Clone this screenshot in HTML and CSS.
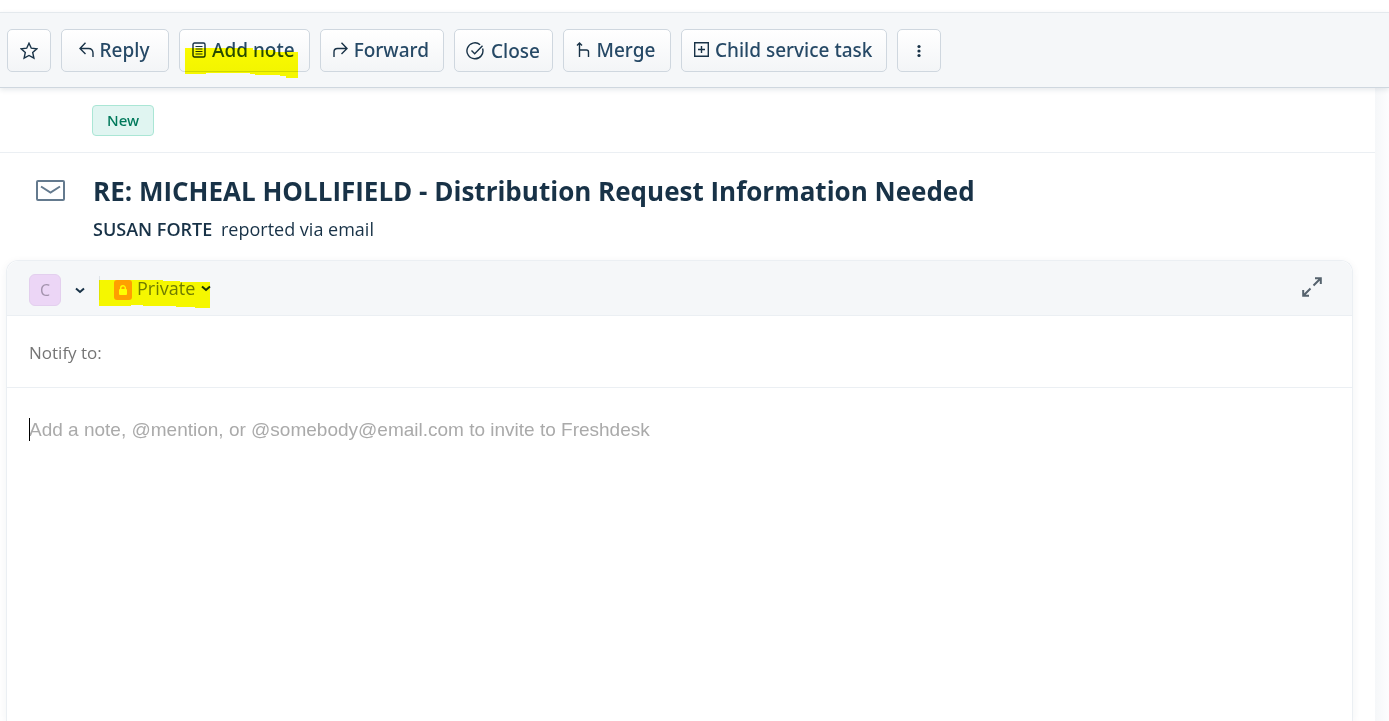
FILE: index.html
```html
<!DOCTYPE html>
<html lang="en">
<head>
	<meta charset="utf-8">
	<title>RE: MICHEAL HOLLIFIELD - Distribution Request Information Needed</title>
	<link rel="stylesheet" href="styles.css">
</head>
<body>

	<header class="toolbar">
		<button class="btn btn-icon" aria-label="Watch">
			<svg width="18" height="18" viewBox="0 0 18 18"><path d="M9 1.200l2.300 5 5.500.6-4.100 3.700 1.200 5.700L9 13.500l-4.900 2.700 1.200-5.700L1.200 6.800l5.500-.6z"/></svg>
		</button>
		<button class="btn">
			<svg width="15" height="16" viewBox="0 0 15 16"><path d="M6.500.800L1 6.500l5.500 5.500M1 6.500H9.500Q14 6.500 14 11v4"/></svg>
			Reply
		</button>
		<button class="btn marked">
			<svg width="14" height="16" viewBox="0 0 14 16"><rect x="1" y="1" width="12" height="14" rx="1.500"/><path class="thin" d="M3.500 4.500h7M3.500 7h7M3.500 9.500h7M3.500 12h7"/></svg>
			Add note
			<svg class="marker" width="113" height="30" viewBox="0 0 113 30"><path d="M0 0H68V2H90V4H113V30H101V28H95V27H70V26H65V25H21V26H0z"/></svg>
		</button>
		<button class="btn">
			<svg width="15" height="16" viewBox="0 0 15 16"><path d="M8.500.800L14 6.500 8.500 12M14 6.500H4.500Q1 6.500 1 10v5"/></svg>
			Forward
		</button>
		<button class="btn btn-close">
			<svg width="18" height="18" viewBox="0 0 18 18"><path d="M16.600 6.500a8 8 0 1 1-2.500-3.800M5.500 8.500l3.200 3.200L16.500 3.800"/></svg>
			Close
		</button>
		<button class="btn">
			<svg width="14" height="16" viewBox="0 0 14 16"><path d="M1 3.500L3.500 1 6 3.500M3.500 1v14M3.500 8h7q2 0 2 2v5"/></svg>
			Merge
		</button>
		<button class="btn">
			<svg width="15" height="15" viewBox="0 0 15 15"><path d="M.7.700h13.600v13.600H.7zM7.500 4v7M4 7.500h7"/></svg>
			Child service task
		</button>
		<button class="btn btn-icon" aria-label="More">
			<svg class="dots" width="4" height="14" viewBox="0 0 4 14"><circle cx="2" cy="2.500" r="1.600"/><circle cx="2" cy="7" r="1.600"/><circle cx="2" cy="11.500" r="1.600"/></svg>
		</button>
	</header>

	<div class="page">
		<main class="ticket">
			<div class="status-row">
				<span class="badge">New</span>
			</div>

			<div class="subject">
				<svg class="mail" width="29" height="21" viewBox="0 0 29 21"><rect x="1" y="1" width="27" height="19" rx="1"/><path d="M5 6.500l9.500 6 9.500-6"/></svg>
				<div>
					<h1>RE: MICHEAL HOLLIFIELD - Distribution Request Information Needed</h1>
					<p><strong>SUSAN FORTE</strong> reported via email</p>
				</div>
			</div>

			<form class="editor">
				<div class="editor-head">
					<button type="button" class="agent" aria-label="Agent">
						<span class="avatar">C</span>
						<svg class="chevron" width="10" height="7" viewBox="0 0 10 7"><path d="M1 1.500l4 3.500 4-3.500"/></svg>
					</button>
					<div class="privacy">
						<svg class="lock" width="18" height="20" viewBox="0 0 18 20"><rect class="lock-bg" width="18" height="20" rx="3"/><rect class="lock-body" x="5" y="9" width="8" height="6" rx="1"/><path class="lock-bow" d="M6.700 9.500V8a2.300 2.300 0 0 1 4.600 0v1.500"/></svg>
						<select aria-label="Note visibility">
							<option>Private</option>
							<option>Public</option>
						</select>
						<svg class="chevron" width="10" height="7" viewBox="0 0 10 7"><path d="M1 1.500l4 3.500 4-3.500"/></svg>
						<svg class="marker" width="111" height="28" viewBox="0 0 111 28"><path d="M0 0H64V1H81V2H111V28H96V27H77V26H44V25H32V26H0z"/></svg>
					</div>
					<button type="button" class="expand" aria-label="Expand">
						<svg width="20" height="20" viewBox="0 0 20 20"><path d="M11.500 8.500l7-7M13 1.200h5.800V7M8.500 11.500l-7 7M1.200 13v5.800H7"/></svg>
					</button>
				</div>
				<div class="notify">
					<label for="notify">Notify to:</label>
					<input id="notify" type="text">
				</div>
				<div class="note">
					<textarea aria-label="Note" placeholder="Add a note, @mention, or @somebody@email.com to invite to Freshdesk"></textarea>
					<span class="caret"></span>
				</div>
			</form>
		</main>
		<aside class="side"></aside>
	</div>

</body>
</html>
```
FILE: styles.css
```css
* {
	margin: 0;
	padding: 0;
	box-sizing: border-box;
}

body {
	display: flex;
	flex-direction: column;
	height: 100vh;
	padding-top: 12px;
	overflow: hidden;
	font-family: "Open Sans", "Noto Sans", sans-serif;
	font-size: 18px;
	color: #183247;
	background: white;
}

button,
input,
select,
textarea {
	font: inherit;
	color: inherit;
	border: 0;
	background: none;
	outline: none;
}

svg {
	flex: none;
	fill: none;
	stroke: currentColor;
	stroke-width: 1.4;
}

/* toolbar */
.toolbar {
	display: flex;
	gap: 10px;
	padding: 16px 7px 15px;
	background: #f5f7f9;
	border-top: 1px solid #e4e9ed;
	border-bottom: 1px solid #cfd7df;
	box-shadow: 0 2px 5px rgba(24, 50, 71, 0.1);
	z-index: 1;
}

.btn {
	position: relative;
	display: flex;
	align-items: center;
	justify-content: center;
	gap: 6px;
	min-width: 108px;
	height: 43px;
	padding: 0 14px 2px 12px;
	font-family: "Noto Sans", "Open Sans", sans-serif;
	font-size: 19px;
	font-weight: 500;
	line-height: 38px;
	color: #264966;
	white-space: nowrap;
	background: linear-gradient(to bottom, #ffffff, #f3f5f7);
	border: 1px solid #cfd7df;
	border-radius: 5px;
}

.btn svg {
	color: #183247;
}

.btn-icon {
	width: 44px;
	min-width: 0;
	padding: 0;
}

.btn-close {
	gap: 7px;
	min-width: 0;
	padding: 0 12px 0 11px;
}

.dots {
	fill: currentColor;
	stroke: none;
}

.thin {
	stroke-width: 1;
}

.marker {
	position: absolute;
	fill: #ffff00;
	stroke: none;
	mix-blend-mode: multiply;
	pointer-events: none;
}

.marked .marker {
	left: 5px;
	top: 18px;
}

/* ticket */
.page {
	display: flex;
	flex: 1;
	min-height: 0;
}

.ticket {
	display: flex;
	flex-direction: column;
	flex: 1;
}

.side {
	width: 14px;
	background: linear-gradient(to right, #f5f7f9, #fdfdfe);
}

.status-row {
	display: flex;
	padding: 17px 92px 16px;
	border-bottom: 1px solid #ebeff3;
}

.badge {
	padding: 0 14px;
	font-family: "Noto Sans", "Open Sans", sans-serif;
	font-size: 15px;
	font-weight: 500;
	line-height: 29px;
	color: #00795b;
	background: #e0f5f1;
	border: 1px solid #aae6d5;
	border-radius: 4px;
}

.subject {
	display: flex;
	gap: 28px;
	padding: 20px 36px 18px;
}

.mail {
	margin-top: 7px;
	color: #647a8e;
	stroke-width: 2;
}

.subject h1 {
	font-size: 26px;
	font-weight: 700;
	line-height: 36px;
}

.subject p {
	margin-top: 7px;
	line-height: 26px;
}

.subject strong {
	margin-right: 4px;
	font-weight: 600;
}

/* note editor */
.editor {
	display: flex;
	flex-direction: column;
	flex: 1;
	margin: 0 22px 0 6px;
	border: 1px solid #ebeff3;
	border-bottom: 0;
	border-radius: 12px 12px 0 0;
	box-shadow: 0 2px 8px rgba(24, 50, 71, 0.06);
}

.editor-head {
	display: flex;
	align-items: center;
	height: 55px;
	padding: 0 30px 0 22px;
	background: #f5f7f9;
	border-bottom: 1px solid #ebeff3;
	border-radius: 12px 12px 0 0;
}

.agent {
	display: flex;
	align-items: center;
	gap: 14px;
	margin-top: 4px;
}

.avatar {
	width: 32px;
	height: 32px;
	font-size: 16px;
	line-height: 30px;
	color: #a393ad;
	background: #ecd6f6;
	border: 1px solid #e3cfee;
	border-radius: 6px;
}

.chevron {
	stroke-width: 2;
}

.privacy {
	position: relative;
	display: flex;
	align-items: center;
	gap: 5px;
	margin-left: 14px;
	padding-left: 14px;
	border-left: 1px solid #dfe4e9;
}

.privacy select {
	appearance: none;
	line-height: 24px;
	color: #6f7c87;
}

.privacy .marker {
	left: -1px;
	top: 4px;
}

.lock {
	margin-top: 4px;
}

.lock-bg {
	fill: #ff9f0a;
	stroke: none;
}

.lock-body {
	fill: #ffffff;
	stroke: none;
}

.lock-bow {
	stroke: #ffffff;
}

.expand {
	display: flex;
	margin-left: auto;
	padding-bottom: 2px;
	color: #56636e;
}

.expand svg {
	stroke-width: 2;
}

.notify {
	display: flex;
	align-items: center;
	gap: 8px;
	height: 72px;
	padding: 2px 22px 0;
	font-size: 17px;
	color: #757575;
	border-bottom: 1px solid #ebeff3;
}

.notify input {
	flex: 1;
}

.note {
	position: relative;
	display: flex;
	flex: 1;
	padding: 30px 22px 0;
}

.note textarea {
	flex: 1;
	font-family: "Liberation Sans", Arial, sans-serif;
	font-size: 19px;
	line-height: 24px;
	resize: none;
}

.note textarea::placeholder {
	color: #aaaaaa;
}

.caret {
	position: absolute;
	left: 22px;
	top: 30px;
	width: 1px;
	height: 23px;
	background: black;
}
```
